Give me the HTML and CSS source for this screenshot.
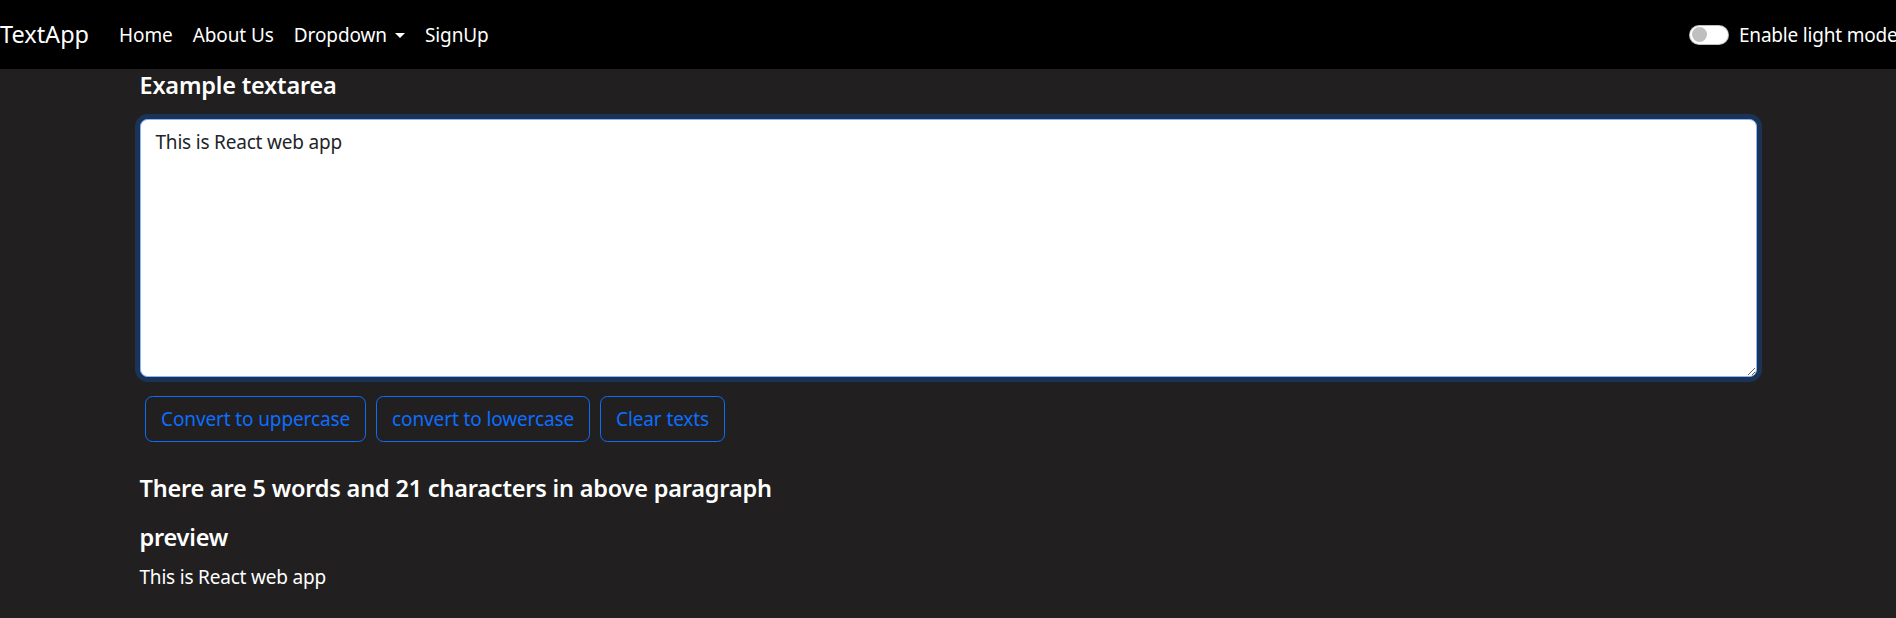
FILE: index.html
```html
<!DOCTYPE html>
<html lang="en">
<head>
<meta charset="utf-8">
<title>TextApp</title>
<link rel="stylesheet" href="styles.css">
</head>
<body>
<nav class="navbar">
  <a class="brand" href="#">TextApp</a>
  <ul class="nav">
    <li><a class="nav-link" href="#">Home</a></li>
    <li><a class="nav-link" href="#">About Us</a></li>
    <li><a class="nav-link dropdown" href="#">Dropdown<span class="caret"></span></a></li>
    <li><a class="nav-link" href="#">SignUp</a></li>
  </ul>
  <div class="switch-group">
    <span class="switch"><span class="knob"></span></span>
    <label class="switch-label">Enable light mode</label>
  </div>
</nav>
<main class="container">
  <h1 class="heading first">Example textarea</h1>
  <div class="field">
    <textarea class="textbox" rows="8">This is React web app</textarea>
  </div>
  <div class="actions">
    <button class="btn">Convert to uppercase</button>
    <button class="btn">convert to lowercase</button>
    <button class="btn">Clear texts</button>
  </div>
</main>
<section class="container summary">
  <h2 class="heading count">There are 5 words and 21 characters in above paragraph</h2>
  <h2 class="heading">preview</h2>
  <p class="preview">This is React web app</p>
</section>
</body>
</html>
```

FILE: styles.css
```css
html, body {
  margin: 0;
  padding: 0;
  overflow: hidden;
}
body {
  background: #211f20;
  color: #ffffff;
  font-family: "Noto Sans", "Open Sans", sans-serif;
  font-size: 19px;
  letter-spacing: -0.2px;
  line-height: 30px;
  height: 618px;
}
.navbar {
  display: flex;
  align-items: center;
  height: 69px;
  background: #000000;
  white-space: nowrap;
}
.brand {
  color: #ffffff;
  text-decoration: none;
  font-size: 23.5px;
  letter-spacing: 0;
  margin-right: 20px;
  line-height: 1.5;
}
.nav {
  display: flex;
  list-style: none;
  margin: 0;
  padding: 0;
}
.nav-link {
  display: block;
  color: #ffffff;
  text-decoration: none;
  letter-spacing: -0.1px;
  padding: 0 10px;
}
.caret {
  display: inline-block;
  margin-left: 8px;
  vertical-align: 4px;
  border-top: 5px solid #ffffff;
  border-left: 5px solid transparent;
  border-right: 5px solid transparent;
}
.switch-group {
  margin-left: auto;
  width: 207px;
  display: flex;
  align-items: center;
  overflow: visible;
}
.switch {
  flex: none;
  position: relative;
  width: 40px;
  height: 20px;
  box-sizing: border-box;
  background: #ffffff;
  border: 1px solid rgba(0, 0, 0, 0.25);
  border-radius: 10px;
}
.knob {
  position: absolute;
  left: 2px;
  top: 1.5px;
  width: 15px;
  height: 15px;
  border-radius: 50%;
  background: #bfbfbf;
}
.switch-label {
  margin-left: 10px;
}
.container {
  width: 1617px;
  margin: 0 auto;
}
.heading {
  font-size: 23.5px;
  letter-spacing: -0.2px;
  font-weight: 600;
  line-height: 30px;
  margin: 0 0 10px;
}
.heading.first {
  margin-top: 1px;
  margin-bottom: 18.5px;
}
.field {
  margin-bottom: 19.5px;
}
.textbox {
  display: block;
  box-sizing: border-box;
  width: 100%;
  height: 258px;
  margin: 0;
  padding: 7.5px 15px;
  font-family: inherit;
  font-size: 19px;
  letter-spacing: -0.2px;
  line-height: 30px;
  color: #212529;
  background: #ffffff;
  border: 1.25px solid #86b7fe;
  border-radius: 7.5px;
  box-shadow: 0 0 0 5px rgba(13, 110, 253, 0.25);
  outline: none;
  resize: vertical;
}
.actions {
  display: flex;
  gap: 10px;
  padding: 0 5.5px;
}
.btn {
  box-sizing: border-box;
  height: 45.5px;
  padding: 6.5px 15px;
  font-family: inherit;
  font-size: 19px;
  letter-spacing: -0.12px;
  line-height: 30px;
  color: #0d6efd;
  background: transparent;
  border: 1.25px solid #0d6efd;
  border-radius: 7.5px;
}
.summary {
  margin-top: 31px;
}
.heading.count {
  margin-bottom: 19px;
}
.preview {
  margin: 0;
}
```
